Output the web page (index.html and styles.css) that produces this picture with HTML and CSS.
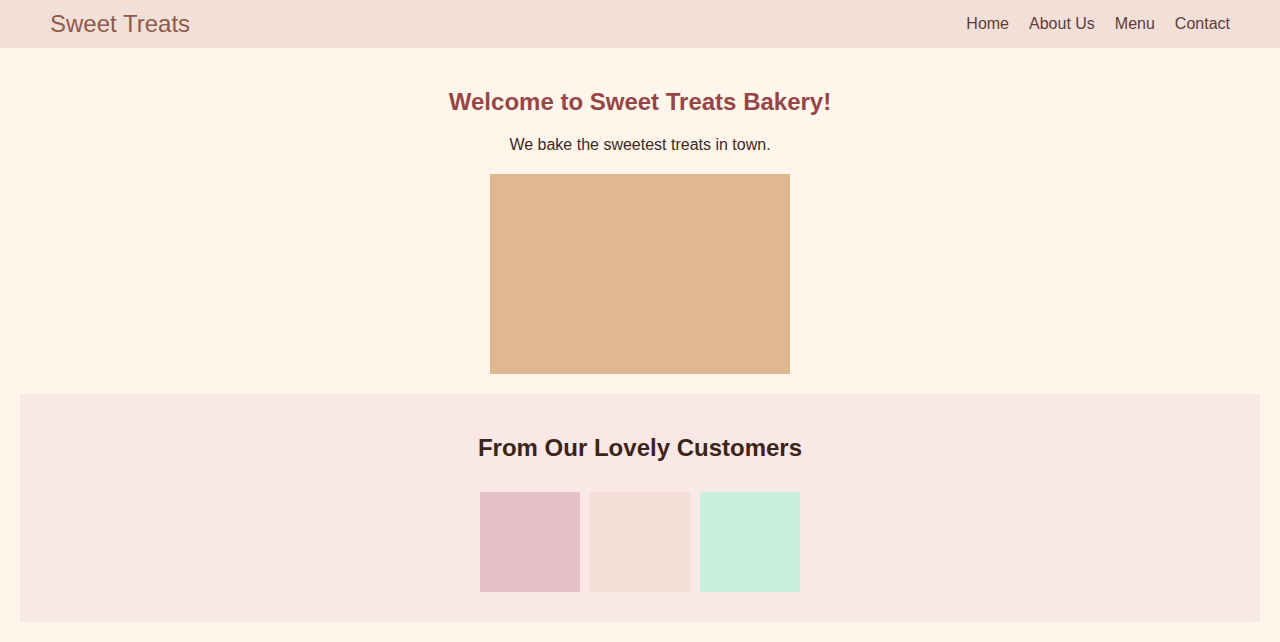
FILE: index.html
```html
<!DOCTYPE html>
<html lang="en">
<head>
<meta charset="utf-8">
<title>Sweet Treats</title>
<link rel="stylesheet" href="styles.css">
</head>
<body>
<header class="site-header">
  <div class="logo">Sweet Treats</div>
  <nav class="nav">
    <a href="#">Home</a>
    <a href="#">About Us</a>
    <a href="#">Menu</a>
    <a href="#">Contact</a>
  </nav>
</header>
<main>
  <section class="hero">
    <h1 class="hero-title">Welcome to Sweet Treats Bakery!</h1>
    <p class="hero-text">We bake the sweetest treats in town.</p>
    <div class="hero-image"></div>
  </section>
  <section class="testimonials">
    <h2 class="testimonials-title">From Our Lovely Customers</h2>
    <div class="gallery">
      <div class="tile tile-pink"></div>
      <div class="tile tile-blush"></div>
      <div class="tile tile-mint"></div>
    </div>
  </section>
</main>
</body>
</html>
```
FILE: styles.css
```css
html, body {
  margin: 0;
  padding: 0;
}
body {
  background: #fff5eb;
  font-family: "Liberation Sans", Arial, sans-serif;
  color: #3d2a1f;
}
.site-header {
  height: 48px;
  box-sizing: border-box;
  padding: 0 50px;
  background: #f2dfd8;
  display: flex;
  align-items: center;
  justify-content: space-between;
}
.logo {
  font-size: 24px;
  color: #8f5a48;
}
.nav {
  display: flex;
  gap: 20px;
}
.nav a {
  font-size: 16px;
  color: #5e3d36;
  text-decoration: none;
}
.hero {
  padding: 40px 20px 20px;
  display: flex;
  flex-direction: column;
  align-items: center;
  text-align: center;
}
.hero-title {
  margin: 0 0 20px;
  font-size: 24px;
  font-weight: bold;
  color: #964646;
}
.hero-text {
  margin: 0 0 20px;
  font-size: 16px;
  color: #3d2a1f;
}
.hero-image {
  width: 300px;
  height: 200px;
  background: #dfb892;
}
.testimonials {
  margin: 0 20px 20px;
  padding: 40px 20px 30px;
  background: #fae8e6;
  text-align: center;
}
.testimonials-title {
  margin: 0 0 30px;
  font-size: 24px;
  font-weight: bold;
  color: #3d2418;
}
.gallery {
  display: flex;
  justify-content: center;
  gap: 10px;
}
.tile {
  width: 100px;
  height: 100px;
}
.tile-pink { background: #e7c1c9; }
.tile-blush { background: #f2dfd8; }
.tile-mint { background: #c8f0dc; }
```
